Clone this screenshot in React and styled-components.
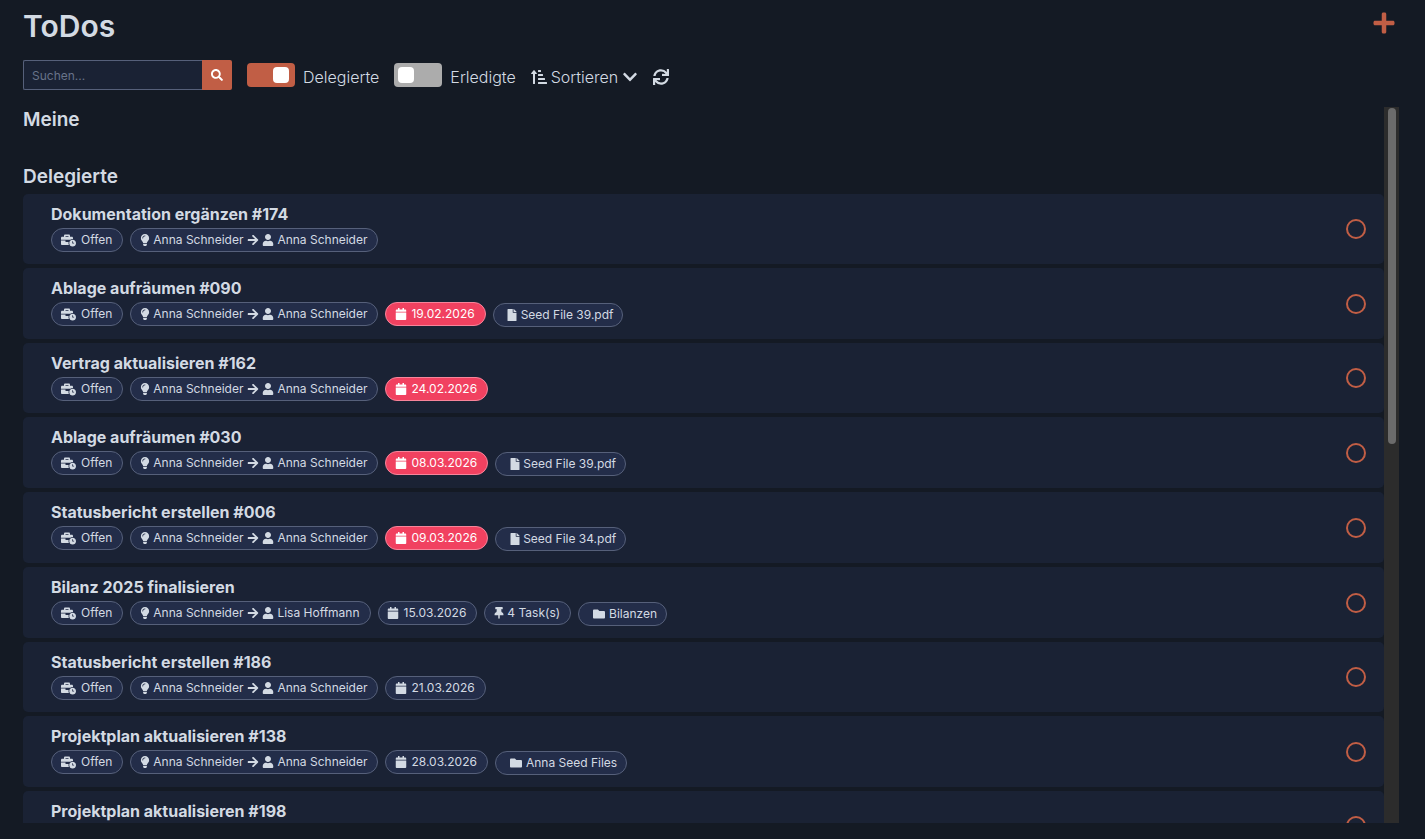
import React, { useState } from "react";
import styled, { createGlobalStyle } from "styled-components";
import {
  FaArrowRight,
  FaBusinessTime,
  FaCalendar,
  FaChevronDown,
  FaFile,
  FaFolder,
  FaLightbulb,
  FaPlus,
  FaSearch,
  FaSortAmountUpAlt,
  FaSync,
  FaThumbtack,
  FaUser
} from "react-icons/fa";

const colors = {
  page: "#141a24",
  panel: "#1a2234",
  badge: "#232d49",
  border: "#56607a",
  text: "#d3dae3",
  accent: "#c15e45",
  overdue: "#f14160"
};

const GlobalStyle = createGlobalStyle`
  * {
    box-sizing: border-box;
  }
  body {
    margin: 0;
    background: ${colors.page};
    color: ${colors.text};
    font-family: Inter, "Open Sans", sans-serif;
    font-size: 16px;
  }
  button, input {
    font-family: inherit;
  }
`;

const Page = styled.main`
  display: flex;
  flex-direction: column;
  height: 100vh;
  padding: 8px 26px 16px 23px;
`;

const Header = styled.header`
  display: flex;
  justify-content: space-between;
  align-items: flex-start;
  height: 52px;
`;

const Title = styled.h1`
  margin: 0;
  font-size: 30px;
  line-height: 36px;
  font-weight: 600;
`;

const PlainButton = styled.button`
  display: flex;
  align-items: center;
  gap: 4px;
  padding: 0;
  border: 0;
  background: none;
  color: inherit;
  font-size: 16px;
  font-weight: 300;
  line-height: 24px;
  cursor: pointer;
`;

const AddButton = styled(PlainButton)`
  margin: 3px 3px 0 0;
  color: ${colors.accent};
  font-size: 24px;
`;

const Toolbar = styled.div`
  display: flex;
  align-items: center;
  gap: 15px;
  height: 30px;
  margin-bottom: 17px;
`;

const SearchBox = styled.form`
  display: flex;
  height: 30px;
`;

const SearchInput = styled.input`
  width: 179px;
  padding: 0 8px;
  border: 1px solid ${colors.border};
  border-right: 0;
  border-radius: 2px 0 0 2px;
  background: ${colors.panel};
  color: ${colors.text};
  font-size: 12px;
  outline: none;

  &::placeholder {
    color: #68738a;
  }
`;

const SearchButton = styled.button`
  display: flex;
  align-items: center;
  justify-content: center;
  width: 30px;
  padding: 0;
  border: 0;
  border-radius: 0 2px 2px 0;
  background: ${colors.accent};
  color: #fff;
  font-size: 12px;
  cursor: pointer;
`;

const SwitchLabel = styled.label`
  display: flex;
  align-items: center;
  gap: 8px;
  font-weight: 300;
  line-height: 24px;
  cursor: pointer;

  span {
    padding-top: 4px;
  }
`;

const Switch = styled.input`
  display: flex;
  align-items: center;
  appearance: none;
  width: 48px;
  height: 24px;
  margin: 0;
  padding: 0 4px;
  border-radius: 4px;
  background: #acacac;
  cursor: pointer;

  &::before {
    content: "";
    width: 16px;
    height: 16px;
    border-radius: 4px;
    background: #fff;
  }
  &:checked {
    background: ${colors.accent};
  }
  &:checked::before {
    margin-left: 22px;
  }
`;

const ToolButton = styled(PlainButton)`
  padding-top: 4px;
`;

const Content = styled.div`
  display: flex;
  flex: 1;
  min-height: 0;
`;

const ScrollArea = styled.div`
  flex: 1;
  overflow-y: auto;
  scrollbar-width: none;
`;

const ScrollTrack = styled.div`
  width: 15px;
  padding: 1px 3px 1px 4px;
  background: #2c2c2c;
`;

const ScrollThumb = styled.div`
  height: 47%;
  border-radius: 4px;
  background: #6b6b6b;
`;

const Group = styled.section`
  min-height: 57px;
`;

const GroupTitle = styled.h2`
  margin: 0 0 4px;
  font-size: 19px;
  line-height: 26px;
  font-weight: 600;
`;

const List = styled.ul`
  display: flex;
  flex-direction: column;
  gap: 4px;
  margin: 0;
  padding: 0;
  list-style: none;
`;

const Row = styled.li`
  display: flex;
  align-items: center;
  justify-content: space-between;
  min-height: 70px;
  padding: 8px 18px 12px 28px;
  border-radius: 5px;
  background: ${colors.panel};
`;

const RowTitle = styled.h3`
  margin: 0 0 2px;
  font-size: 16px;
  line-height: 24px;
  font-weight: 700;
`;

const Badges = styled.div`
  display: flex;
  align-items: flex-start;
  gap: 7px;
`;

const Badge = styled.span`
  display: flex;
  align-items: center;
  gap: ${p => (p.$tight ? 4 : 5)}px;
  height: 24px;
  padding: 0 10px 0 9px;
  border: 1px solid ${p => (p.$overdue ? "#f7849a" : colors.border)};
  border-radius: 12px;
  background: ${p => (p.$overdue ? colors.overdue : colors.badge)};
  color: ${p => (p.$overdue ? "#fff" : colors.text)};
  font-size: 12px;
  line-height: 22px;
  white-space: nowrap;
`;

const Attachment = styled(Badge).attrs({ as: "a", href: "#", $tight: true })`
  margin-top: 1px;
  padding: 0 9px 0 14px;
  text-decoration: none;
`;

// the glyphs differ in width, the square svg box is centred over it
const Icon = styled.span`
  display: flex;
  justify-content: center;
  width: ${p => p.$width}px;

  svg {
    flex-shrink: 0;
  }
`;

const DoneButton = styled.button`
  width: 20px;
  height: 20px;
  margin-top: 4px;
  padding: 0;
  border: 2px solid ${colors.accent};
  border-radius: 50%;
  background: none;
  cursor: pointer;
`;

const todos = [
  { id: 1, title: "Dokumentation ergänzen #174" },
  { id: 2, title: "Ablage aufräumen #090", date: "19.02.2026", overdue: true, file: "Seed File 39.pdf" },
  { id: 3, title: "Vertrag aktualisieren #162", date: "24.02.2026", overdue: true },
  { id: 4, title: "Ablage aufräumen #030", date: "08.03.2026", overdue: true, file: "Seed File 39.pdf" },
  { id: 5, title: "Statusbericht erstellen #006", date: "09.03.2026", overdue: true, file: "Seed File 34.pdf" },
  { id: 6, title: "Bilanz 2025 finalisieren", assignee: "Lisa Hoffmann", date: "15.03.2026", tasks: 4, folder: "Bilanzen" },
  { id: 7, title: "Statusbericht erstellen #186", date: "21.03.2026" },
  { id: 8, title: "Projektplan aktualisieren #138", date: "28.03.2026", folder: "Anna Seed Files" },
  { id: 9, title: "Projektplan aktualisieren #198" }
];

const Todo = ({ todo }) => (
  <Row>
    <div>
      <RowTitle>{todo.title}</RowTitle>
      <Badges>
        <Badge>
          <Icon $width={15}>
            <FaBusinessTime size={15} />
          </Icon>
          Offen
        </Badge>
        <Badge $tight>
          <Icon $width={9}>
            <FaLightbulb />
          </Icon>
          Anna Schneider
          <Icon $width={11}>
            <FaArrowRight />
          </Icon>
          <Icon $width={11}>
            <FaUser />
          </Icon>
          {todo.assignee || "Anna Schneider"}
        </Badge>
        {todo.date && (
          <Badge $overdue={todo.overdue}>
            <Icon $width={11}>
              <FaCalendar />
            </Icon>
            {todo.date}
          </Badge>
        )}
        {todo.tasks && (
          <Badge $tight>
            <Icon $width={9}>
              <FaThumbtack />
            </Icon>
            {todo.tasks} Task(s)
          </Badge>
        )}
        {todo.file && (
          <Attachment>
            <Icon $width={9}>
              <FaFile />
            </Icon>
            {todo.file}
          </Attachment>
        )}
        {todo.folder && (
          <Attachment>
            <Icon $width={12}>
              <FaFolder />
            </Icon>
            {todo.folder}
          </Attachment>
        )}
      </Badges>
    </div>
    <DoneButton aria-label={`${todo.title} erledigen`} />
  </Row>
);

export default function App() {
  const [delegated, setDelegated] = useState(true);
  const [done, setDone] = useState(false);

  return (
    <Page>
      <GlobalStyle />
      <Header>
        <Title>ToDos</Title>
        <AddButton aria-label="Neues ToDo">
          <FaPlus />
        </AddButton>
      </Header>
      <Toolbar>
        <SearchBox onSubmit={e => e.preventDefault()}>
          <SearchInput placeholder="Suchen..." aria-label="Suchen" />
          <SearchButton aria-label="Suche starten">
            <FaSearch />
          </SearchButton>
        </SearchBox>
        <SwitchLabel>
          <Switch
            type="checkbox"
            checked={delegated}
            onChange={e => setDelegated(e.target.checked)}
          />
          <span>Delegierte</span>
        </SwitchLabel>
        <SwitchLabel>
          <Switch
            type="checkbox"
            checked={done}
            onChange={e => setDone(e.target.checked)}
          />
          <span>Erledigte</span>
        </SwitchLabel>
        <ToolButton>
          <FaSortAmountUpAlt />
          Sortieren
          <FaChevronDown />
        </ToolButton>
        <ToolButton aria-label="Aktualisieren">
          <FaSync />
        </ToolButton>
      </Toolbar>
      <Content>
        <ScrollArea>
          <Group>
            <GroupTitle>Meine</GroupTitle>
          </Group>
          {delegated && (
            <Group>
              <GroupTitle>Delegierte</GroupTitle>
              <List>
                {todos.map(todo => (
                  <Todo key={todo.id} todo={todo} />
                ))}
              </List>
            </Group>
          )}
        </ScrollArea>
        <ScrollTrack>
          <ScrollThumb />
        </ScrollTrack>
      </Content>
    </Page>
  );
}
